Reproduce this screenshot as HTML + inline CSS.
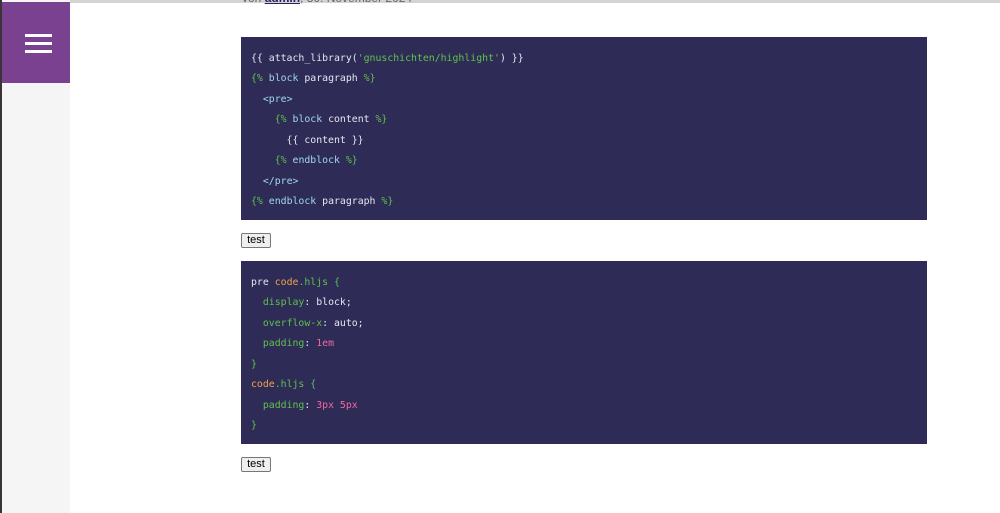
<!DOCTYPE html>
<html><head><meta charset="utf-8"><style>
html,body{margin:0;padding:0;width:1000px;height:513px;overflow:hidden;background:#fff;position:relative;font-family:"Liberation Sans",sans-serif}
.dark{position:absolute;left:0;top:0;width:2px;height:513px;background:#3a3438}
.side{position:absolute;left:2px;top:0;width:68px;height:513px;background:#f4f5f4}
.purple{position:absolute;left:2px;top:2px;width:68px;height:81px;background:#7a4190}
.bar{position:absolute;left:23px;width:27px;height:3px;background:#fff}
.topline{position:absolute;left:70px;top:0;width:930px;height:3px;background:#d4d4d4}
.meta{position:absolute;left:242px;top:-9px;font-size:12px;color:#666}
.meta b{color:#2b2060;text-decoration:underline;font-weight:bold}
.code{position:absolute;left:241px;width:686px;height:183px;background:#2e2b57;font-family:"DejaVu Sans Mono","Liberation Mono",monospace;font-size:9.85px;color:#e6e6f0}
.code div{position:absolute;left:10px;white-space:pre;line-height:12px}
.g{color:#5fc24a}.k{color:#9fd8f0}.o{color:#f2a24a}.p{color:#f06aa0}.s{color:#5fc24a}
.btn{position:absolute;left:241px;width:28px;height:13px;border:1px solid #777;border-radius:2px;background:#efefef;font-size:11px;line-height:13px;text-align:center;color:#000}
</style></head><body>
<div class="dark"></div>
<div class="side"></div>
<div class="purple"><div class="bar" style="top:32px"></div><div class="bar" style="top:40px"></div><div class="bar" style="top:48px"></div></div>
<div class="topline"></div>
<div class="meta">von <b>admin</b>, 30. November 2024</div>

<div class="code" style="top:37px">
<div style="top:15.5px">{{ attach_library(<span class="s">'gnuschichten/highlight'</span>) }}</div>
<div style="top:36px"><span class="g">{%</span> <span class="k">block</span> paragraph <span class="g">%}</span></div>
<div style="top:56.5px">  <span class="k">&lt;pre&gt;</span></div>
<div style="top:77px">    <span class="g">{%</span> <span class="k">block</span> content <span class="g">%}</span></div>
<div style="top:97.5px">      {{ content }}</div>
<div style="top:118px">    <span class="g">{%</span> <span class="k">endblock</span> <span class="g">%}</span></div>
<div style="top:138.5px">  <span class="k">&lt;/pre&gt;</span></div>
<div style="top:159px"><span class="g">{%</span> <span class="k">endblock</span> paragraph <span class="g">%}</span></div>
</div>
<div class="btn" style="top:233px">test</div>

<div class="code" style="top:261px">
<div style="top:15.5px">pre <span class="o">code</span><span class="g">.hljs</span> <span class="g">{</span></div>
<div style="top:36px">  <span class="g">display</span>: block;</div>
<div style="top:56.5px">  <span class="g">overflow-x</span>: auto;</div>
<div style="top:77px">  <span class="g">padding</span>: <span class="p">1em</span></div>
<div style="top:97.5px"><span class="g">}</span></div>
<div style="top:118px"><span class="o">code</span><span class="g">.hljs</span> <span class="g">{</span></div>
<div style="top:138.5px">  <span class="g">padding</span>: <span class="p">3px 5px</span></div>
<div style="top:159px"><span class="g">}</span></div>
</div>
<div class="btn" style="top:457px">test</div>
</body></html>
